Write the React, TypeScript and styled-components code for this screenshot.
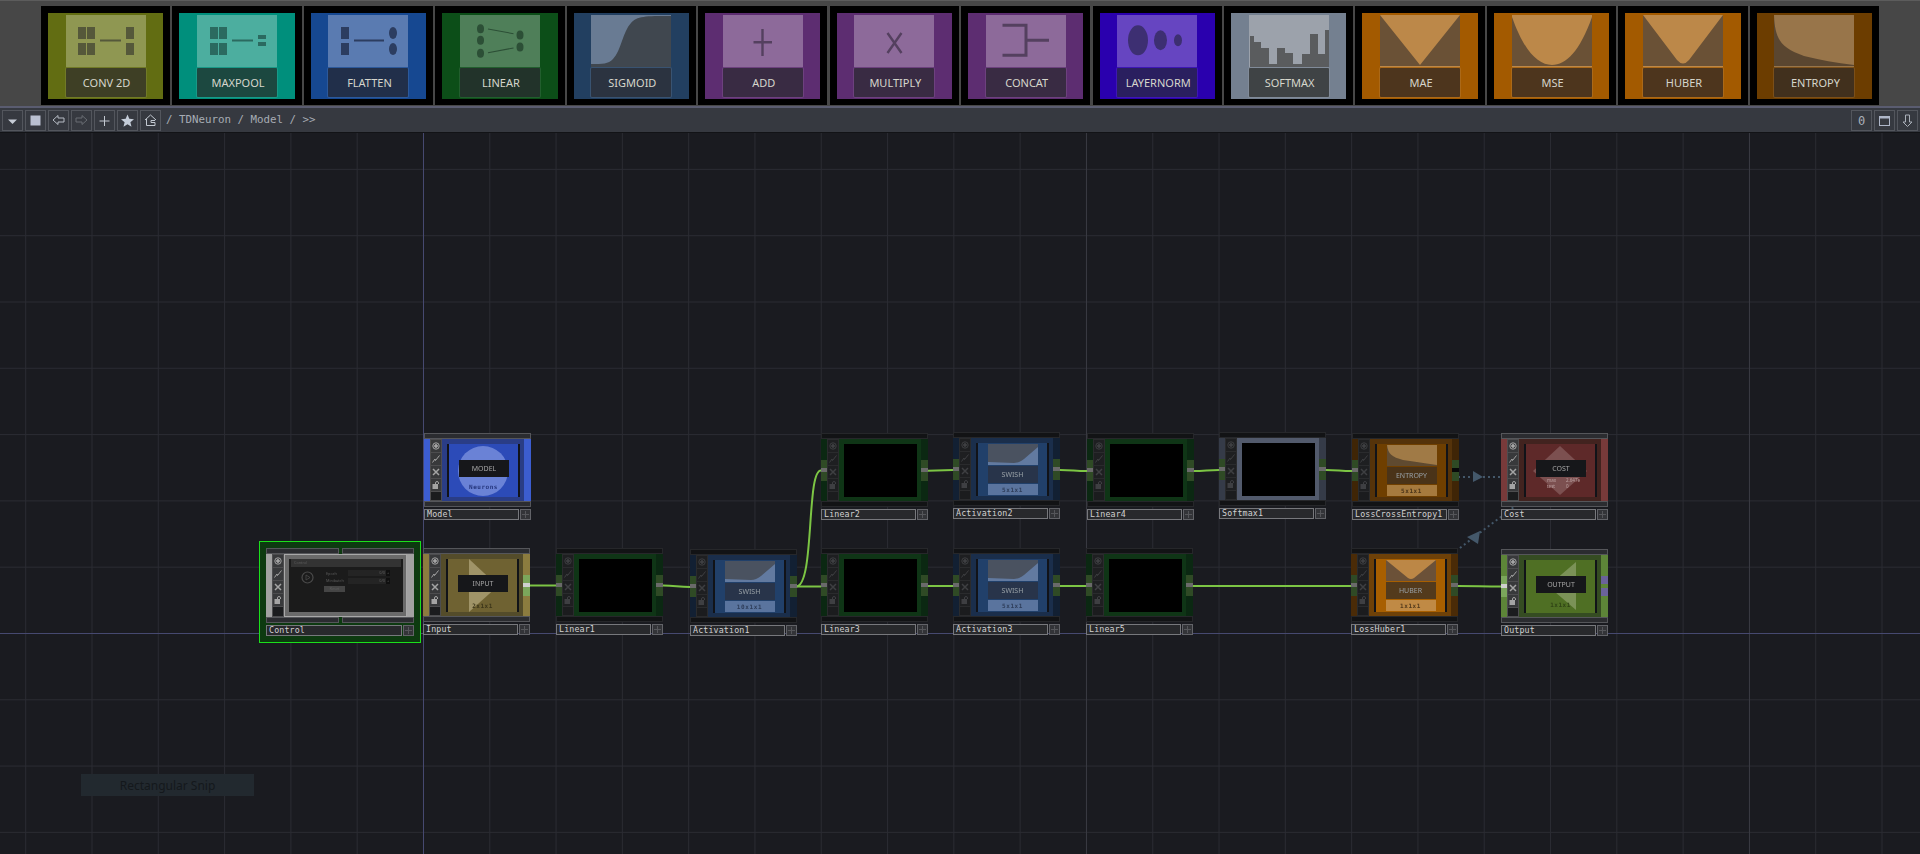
import React from 'react';
import styled, { createGlobalStyle } from 'styled-components';

const GlobalStyle = createGlobalStyle`
  html, body { margin: 0; padding: 0; background: #1a1b20; overflow: hidden; }
`;

const CANVAS_TOP = 133;

/* ---------- palette card strip ---------- */

type CardColors = { outer: string; panel: string; label: string; ink: string };

const OLIVE = { outer: '#626d12', panel: '#8f9752', label: '#3e3f25', ink: '#55583a' };
const TEAL = { outer: '#008f7c', panel: '#4cae9f', label: '#1c4840', ink: '#2b6a60' };
const BLUE = { outer: '#164891', panel: '#5a7bb1', label: '#212f4a', ink: '#2c3d60' };
const GREEN = { outer: '#0c4e18', panel: '#4f7f59', label: '#22332a', ink: '#2c4f36' };
const SLATE = { outer: '#223f60', panel: '#697b93', label: '#2b3340', ink: '#40474f' };
const PURPLE = { outer: '#5d2d71', panel: '#8d6a9a', label: '#392b43', ink: '#54405f' };
const INDIGO = { outer: '#2a00ae', panel: '#6645c1', label: '#2a1f5f', ink: '#3d2f72' };
const STEEL = { outer: '#748090', panel: '#9ca2ab', label: '#3f4345', ink: '#5a5c5e' };
const ORANGE = { outer: '#a35a00', panel: '#bc8849', label: '#4d351d', ink: '#6a5136' };
const BROWN = { outer: '#6c3d00', panel: '#98754a', label: '#41301d', ink: '#5a4630' };

const cardArt: Record<string, (ink: string) => React.ReactNode> = {
  'CONV 2D': (ink) => (
    <g fill={ink}>
      <rect x="12" y="12" width="8" height="12" /><rect x="21" y="12" width="8" height="12" />
      <rect x="12" y="28" width="8" height="12" /><rect x="21" y="28" width="8" height="12" />
      <rect x="34" y="24.5" width="21" height="2" />
      <rect x="60" y="12" width="8" height="12" /><rect x="60" y="28" width="8" height="12" />
    </g>
  ),
  MAXPOOL: (ink) => (
    <g fill={ink}>
      <rect x="13" y="12" width="8" height="12" /><rect x="22" y="12" width="8" height="12" />
      <rect x="13" y="28" width="8" height="12" /><rect x="22" y="28" width="8" height="12" />
      <rect x="35" y="24.5" width="21" height="2" />
      <rect x="61" y="20" width="8" height="4" /><rect x="61" y="27" width="8" height="4" />
    </g>
  ),
  FLATTEN: (ink) => (
    <g fill={ink}>
      <rect x="13" y="12" width="8" height="12" /><rect x="13" y="28" width="8" height="12" />
      <rect x="26" y="24.5" width="30" height="2" />
      <ellipse cx="65" cy="18" rx="4" ry="6" /><ellipse cx="65" cy="34" rx="4" ry="6" />
    </g>
  ),
  LINEAR: (ink) => (
    <g fill={ink}>
      <ellipse cx="20.5" cy="13.7" rx="3.5" ry="4.5" /><ellipse cx="20.5" cy="25.3" rx="3.5" ry="4.5" />
      <ellipse cx="20.5" cy="38.3" rx="3.5" ry="4.5" />
      <ellipse cx="60" cy="20" rx="3.5" ry="4.5" /><ellipse cx="60" cy="32" rx="3.5" ry="4.5" />
      <path d="M28 14L53.5 18.7M28 37.7L53.5 33" stroke={ink} strokeWidth="1.1" fill="none" />
    </g>
  ),
  SIGMOID: (ink) => (
    <path d="M0 49C12 49 17 49 22 44C30 36 32 16 40 8C46 1 54 1 80 1V52H0Z" fill={ink} />
  ),
  ADD: (ink) => <path d="M39.5 14V41M30.5 27.3H49" stroke={ink} strokeWidth="2.4" fill="none" />,
  MULTIPLY: (ink) => <path d="M33.5 18L47.5 38M47.5 18L33.5 38" stroke={ink} strokeWidth="2.4" fill="none" />,
  CONCAT: (ink) => <path d="M16.5 10.3H40V40.3H16.5M40 25.3H63" stroke={ink} strokeWidth="3" fill="none" />,
  LAYERNORM: (ink) => (
    <g fill={ink}>
      <ellipse cx="21" cy="25.3" rx="10" ry="15" />
      <ellipse cx="43.5" cy="25.3" rx="6.5" ry="10" />
      <ellipse cx="61" cy="25.3" rx="4" ry="6" />
    </g>
  ),
  SOFTMAX: (ink) => (
    <path
      d="M1 52V21H5V27H12V33H20V49H28V33H36V38H44V49H53V39H61V19H69V39H76V15H80V52Z"
      fill={ink}
    />
  ),
  MAE: (ink) => <path d="M0 0L40 50L80 0V52H0Z" fill={ink} />,
  MSE: (ink) => <path d="M0 2C12 36 26 50 40 50C54 50 68 36 80 2V52H0Z" fill={ink} />,
  HUBER: (ink) => <path d="M0 0L34 45Q40 52 46 45L80 0V52H0Z" fill={ink} />,
  ENTROPY: (ink) => <path d="M0 0C1 26 8 33 30 41C46 45 62 48 80 50V52H0Z" fill={ink} />,
};

const CARDS: { name: string; colors: CardColors }[] = [
  { name: 'CONV 2D', colors: OLIVE },
  { name: 'MAXPOOL', colors: TEAL },
  { name: 'FLATTEN', colors: BLUE },
  { name: 'LINEAR', colors: GREEN },
  { name: 'SIGMOID', colors: SLATE },
  { name: 'ADD', colors: PURPLE },
  { name: 'MULTIPLY', colors: PURPLE },
  { name: 'CONCAT', colors: PURPLE },
  { name: 'LAYERNORM', colors: INDIGO },
  { name: 'SOFTMAX', colors: STEEL },
  { name: 'MAE', colors: ORANGE },
  { name: 'MSE', colors: ORANGE },
  { name: 'HUBER', colors: ORANGE },
  { name: 'ENTROPY', colors: BROWN },
];

const Page = styled.div`
  display: flex;
  flex-direction: column;
  width: 1920px;
  height: 854px;
  overflow: hidden;
  background: #1a1b20;
`;

const CardStrip = styled.div`
  box-sizing: border-box;
  height: 106px;
  padding: 5px 41px 3px;
  display: grid;
  grid-template-columns: repeat(14, 1fr);
  column-gap: 2.3px;
  background: #474747;
  border-top: 1px solid #5c5c5c;
`;

const Card = styled.div`
  background: #000;
  padding: 7px 7px 6px;
  display: flex;
`;

const CardFace = styled.div<{ $color: string }>`
  flex: 1;
  display: flex;
  flex-direction: column;
  align-items: center;
  padding: 2px 0;
  background: ${({ $color }) => $color};
`;

const CardPanel = styled.div<{ $color: string }>`
  width: 80px;
  height: 52px;
  background: ${({ $color }) => $color};
  svg { display: block; }
`;

const CardLabel = styled.div<{ $bg: string; $edge: string }>`
  box-sizing: border-box;
  width: 80px;
  height: 29px;
  margin-top: 1px;
  padding-left: 2px;
  display: flex;
  align-items: center;
  justify-content: center;
  background: ${({ $bg }) => $bg};
  border-radius: 1px;
  box-shadow: 0 0 0 1px ${({ $edge }) => $edge}55;
  color: #d6d6cc;
  font: 11px "Noto Sans", sans-serif;
`;

/* ---------- path bar ---------- */

const PathBar = styled.div`
  box-sizing: border-box;
  height: 27px;
  padding: 2px 2px 1px;
  display: flex;
  align-items: flex-start;
  gap: 2px;
  background: #363940;
  border-top: 2px solid #5a5c70;
  border-bottom: 1px solid #121316;
`;

const BarButton = styled.div`
  box-sizing: border-box;
  flex: none;
  width: 21px;
  height: 21px;
  display: flex;
  align-items: center;
  justify-content: center;
  border: 1px solid #53565d;
  color: #a9afb8;
  font: 12px "DejaVu Sans Mono", monospace;
  svg { display: block; }
`;

const PathText = styled.div`
  margin: 3px 0 0 3px;
  color: #a6acb4;
  font: 10.8px/14px "DejaVu Sans Mono", monospace;
  white-space: pre;
`;

const BarSpacer = styled.div`
  flex: 1;
`;

/* ---------- network canvas ---------- */

const Canvas = styled.div`
  position: relative;
  flex: 1;
  overflow: hidden;
  background-color: #1a1b20;
  background-image:
    linear-gradient(#464970, #464970),
    linear-gradient(#464970, #464970),
    linear-gradient(to right, #383941 1px, transparent 1px),
    linear-gradient(to right, #2a2b32 1px, transparent 1px),
    linear-gradient(to bottom, #2a2b32 1px, transparent 1px);
  background-repeat: no-repeat, no-repeat, repeat, repeat, repeat;
  background-size: 1px 100%, 100% 1px, 663px 100%, 66.3px 100%, 100% 66.3px;
  background-position: 423px 0, 0 500px, 423px 0, 25.2px 0, 0 35.9px;
`;

const WireLayer = styled.svg`
  position: absolute;
  left: 0;
  top: 0;
  pointer-events: none;
`;

const SnipBox = styled.div`
  position: absolute;
  left: 81px;
  top: 641px;
  width: 173px;
  height: 22px;
  display: flex;
  align-items: center;
  justify-content: center;
  background: #22292f;
  color: #14181c;
  font: 12px "Noto Sans", sans-serif;
`;

const SelectBox = styled.div`
  position: absolute;
  left: 259px;
  top: 408px;
  width: 162px;
  height: 102px;
  box-sizing: border-box;
  border: 1px solid #1be01b;
  background: #0d3a10;
`;

const NodeRoot = styled.div<{ $x: number; $y: number; $w: number }>`
  position: absolute;
  left: ${({ $x }) => $x}px;
  top: ${({ $y }) => $y - CANVAS_TOP}px;
  width: ${({ $w }) => $w}px;
  display: flex;
  flex-direction: column;
`;

const EdgeRow = styled.div`
  display: flex;
  gap: 3px;
`;

const EdgeBar = styled.div<{ $lit: boolean }>`
  flex: 1;
  box-sizing: border-box;
  height: 6px;
  background: ${({ $lit }) => ($lit ? '#2b2c30' : '#121315')};
  border: 1px solid ${({ $lit }) => ($lit ? '#55565a' : '#26272a')};
`;

const NodeBody = styled.div<{ $h: number }>`
  height: ${({ $h }) => $h}px;
  display: flex;
`;

const Strip = styled.div<{ $w: number; $color: string }>`
  flex: none;
  width: ${({ $w }) => $w}px;
  display: flex;
  flex-direction: column;
  align-items: stretch;
  justify-content: center;
  background: ${({ $color }) => $color};
`;

const PORT_TONES = {
  dim: { bg: '#2f4a25', core: '#6a6a6a' },
  black: { bg: '#2f4a25', core: '#08090a' },
  lit: { bg: '#7ba65b', core: '#cfcfcf' },
};

const Port = styled.div<{ $tone: keyof typeof PORT_TONES }>`
  height: 21px;
  display: flex;
  align-items: center;
  background: ${({ $tone }) => PORT_TONES[$tone].bg};
  &::after {
    content: '';
    flex: 1;
    height: 4px;
    background: ${({ $tone }) => PORT_TONES[$tone].core};
  }
`;

const PurpleTab = styled.div`
  height: 8px;
  background: #6a629a;
  & + & { margin-top: 4px; }
`;

const IconColumn = styled.div<{ $lit: boolean }>`
  flex: none;
  width: 12px;
  display: flex;
  flex-direction: column;
  background: #1b1c1e;
  box-shadow: inset 0 0 0 1px ${({ $lit }) => ($lit ? '#4d4d4f' : '#2a2b2d')};
`;

const IconCell = styled.div<{ $lit: boolean }>`
  height: 12px;
  display: flex;
  align-items: center;
  justify-content: center;
  background: ${({ $lit }) => ($lit ? '#38393b' : '#1e1f21')};
  border: 1px solid ${({ $lit }) => ($lit ? '#4d4d4f' : '#2a2b2d')};
  margin-bottom: -1px;
  color: ${({ $lit }) => ($lit ? '#a4a4a4' : '#3e3f42')};
  svg { display: block; }
`;

const Viewer = styled.div<{ $border: string }>`
  flex: 1;
  display: flex;
  padding: 5px 4px 4px 5px;
  background: ${({ $border }) => $border};
`;

const ViewerImage = styled.div<{ $bg: string; $bars: boolean }>`
  position: relative;
  flex: 1;
  overflow: hidden;
  background: ${({ $bg }) => $bg};
  box-sizing: border-box;
  border-left: ${({ $bars }) => ($bars ? '2px solid #111318' : 'none')};
  border-right: ${({ $bars }) => ($bars ? '2px solid #111318' : 'none')};
  filter: blur(0.4px);
`;

const LabelRow = styled.div`
  margin-top: 2px;
  display: flex;
  gap: 1px;
`;

const NameBox = styled.div<{ $lit: boolean }>`
  flex: 1;
  box-sizing: border-box;
  height: 11px;
  padding-left: 2px;
  background: #28292c;
  border: 1px solid #77787c;
  color: #d2d2d2;
  font: 8.3px/9px "DejaVu Sans Mono", monospace;
  letter-spacing: 0.15px;
  white-space: pre;
  overflow: hidden;
`;

const PlusBox = styled.div`
  flex: none;
  box-sizing: border-box;
  width: 11px;
  height: 11px;
  display: flex;
  align-items: center;
  justify-content: center;
  background: #333438;
  border: 1px solid #626368;
  color: #55565a;
  svg { display: block; }
`;

/* screen parts */

const Shape = styled.svg`
  position: absolute;
  left: 0;
  top: 0;
`;

const Badge = styled.div<{ $top: number }>`
  position: absolute;
  left: 10px;
  top: ${({ $top }) => $top}px;
  width: 50px;
  height: 17px;
  display: flex;
  align-items: center;
  justify-content: center;
  background: #16171a;
  color: #a5a5a5;
  font: 7px "Noto Sans", sans-serif;
`;

const Caption = styled.div<{ $color: string; $top: number }>`
  position: absolute;
  left: 0;
  right: 0;
  top: ${({ $top }) => $top}px;
  text-align: center;
  color: ${({ $color }) => $color};
  font: 600 6px/8px "DejaVu Sans Mono", monospace;
  letter-spacing: 0.5px;
`;

const CostTable = styled.div`
  position: absolute;
  left: 21px;
  right: 15px;
  top: 33px;
  display: grid;
  grid-template-columns: 1fr auto;
  color: #bda2a2;
  font: 4.5px/6px "Noto Sans", sans-serif;
`;

const PanelStack = styled.div`
  position: absolute;
  left: 50%;
  top: 1px;
  transform: translateX(-50%);
  width: 50px;
  display: flex;
  flex-direction: column;
  gap: 1px;
  svg { display: block; }
`;

const PanelLabel = styled.div<{ $bg: string }>`
  height: 17px;
  display: flex;
  align-items: center;
  justify-content: center;
  background: ${({ $bg }) => $bg};
  color: #98a0a6;
  font: 7px "Noto Sans", sans-serif;
`;

const PanelSize = styled.div<{ $bg: string; $color: string }>`
  height: 11px;
  display: flex;
  align-items: center;
  justify-content: center;
  background: ${({ $bg }) => $bg};
  color: ${({ $color }) => $color};
  font: 600 6px "DejaVu Sans Mono", monospace;
  letter-spacing: 0.6px;
`;

/* control panel thumbnail */

const ControlFace = styled.div`
  position: absolute;
  inset: 0;
  color: #5d5d5d;
  font: 3.8px/5px "Noto Sans", sans-serif;
`;

const ControlHeader = styled.div`
  height: 8px;
  margin: 0 2px;
  padding-left: 3px;
  background: #333;
  line-height: 8px;
`;

const ControlMain = styled.div`
  display: flex;
  padding: 3px 0 0 12px;
`;

const PlayRing = styled.svg`
  flex: none;
  margin-top: 1px;
`;

const ControlForm = styled.div`
  margin-left: 12px;
  width: 64px;
  display: flex;
  flex-direction: column;
  gap: 1.5px;
`;

const FormRow = styled.div`
  display: flex;
  height: 6px;
  align-items: center;
`;

const FormName = styled.div`
  width: 22px;
`;

const FormField = styled.div`
  flex: 1;
  height: 6px;
  padding-right: 1px;
  text-align: right;
  background: #242424;
  line-height: 6px;
`;

const FormStep = styled.div`
  width: 4px;
  height: 6px;
  text-align: center;
  background: #0f0f0f;
  line-height: 6px;
`;

const ResetButton = styled.div`
  width: 21px;
  height: 6px;
  margin: 1px 0 0 -2px;
  text-align: center;
  background: #454545;
  line-height: 6px;
`;

/* ---------- small drawings ---------- */

const NodeIcon = ({ i }: { i: number }) => {
  const common = { width: 8, height: 8, viewBox: '0 0 8 8', fill: 'none', stroke: 'currentColor' };
  if (i === 0) {
    return (
      <svg {...common} strokeWidth="1">
        <circle cx="4" cy="4" r="3.2" />
        <circle cx="4" cy="4" r="1.4" fill="currentColor" />
      </svg>
    );
  }
  if (i === 1) {
    return (
      <svg {...common} strokeWidth="1">
        <path d="M0.5 7.5L3 4L3.5 5.5L7.5 0.5" />
      </svg>
    );
  }
  if (i === 2) {
    return (
      <svg {...common} strokeWidth="1.5">
        <path d="M1 1L7 7M7 1L1 7" />
      </svg>
    );
  }
  return (
    <svg {...common} strokeWidth="1">
      <rect x="1" y="3.5" width="4.5" height="4" fill="currentColor" />
      <path d="M3.5 3.5V2A1.5 1.5 0 0 1 6.5 2V3" />
    </svg>
  );
};

const NodePlus = () => (
  <svg width="7" height="7" viewBox="0 0 7 7" fill="currentColor">
    <path d="M3 0H4V3H7V4H4V7H3V4H0V3H3Z" />
  </svg>
);

const BarIcon = ({ kind }: { kind: string }) => {
  const outline = { width: 15, height: 15, viewBox: '0 0 15 15', fill: 'none', strokeWidth: 1 };
  switch (kind) {
    case 'menu':
      return (
        <svg width="15" height="15" viewBox="0 0 15 15"><path d="M3 6.5H12L7.5 11Z" fill="#c6ccd6" /></svg>
      );
    case 'stop':
      return (
        <svg width="15" height="15" viewBox="0 0 15 15"><rect x="2.5" y="2.5" width="10" height="10" fill="#b9bfd0" /></svg>
      );
    case 'back':
      return (
        <svg {...outline} stroke="#b6bcc4"><path d="M2 7L7 2.5V5H13V9H7V11.5Z" /></svg>
      );
    case 'next':
      return (
        <svg {...outline} stroke="#686c72"><path d="M13 7L8 2.5V5H2V9H8V11.5Z" /></svg>
      );
    case 'plus':
      return (
        <svg {...outline} stroke="#c2c8d0"><path d="M7.5 3V13M2.5 8H12.5" /></svg>
      );
    case 'star':
      return (
        <svg width="15" height="15" viewBox="0 0 15 15">
          <path d="M7.5 1.5L9.3 5.8L14 6.2L10.4 9.2L11.5 13.8L7.5 11.3L3.5 13.8L4.6 9.2L1 6.2L5.7 5.8Z" fill="#c4ccd8" />
        </svg>
      );
    case 'home':
      return (
        <svg {...outline} stroke="#c2c8d0">
          <path d="M2 7L7.5 2L13 7M3.5 6V12.5H12V9.5H8V7.5H12" />
        </svg>
      );
    case 'window':
      return (
        <svg {...outline} stroke="#aeb6c8" strokeWidth="1">
          <rect x="2.5" y="3.5" width="10" height="9" />
          <path d="M2.5 4.5H12.5" strokeWidth="2" />
        </svg>
      );
    default:
      return (
        <svg {...outline} stroke="#a9afb8"><path d="M7.5 13.5L3 9H5.5V2H9.5V9H12Z" /></svg>
      );
  }
};

/* ---------- node data ---------- */

type PortTone = keyof typeof PORT_TONES | 'purple' | undefined;

type Skin = { strip: string; rim: string; image: string; lit: boolean; bars?: boolean };

const SKINS: Record<string, Skin> = {
  linear: { strip: '#0b2812', rim: '#0f3516', image: '#000', lit: false },
  swish: { strip: '#122033', rim: '#1a2e4b', image: '#21406a', lit: false, bars: true },
  softmax: { strip: '#353b48', rim: '#525a6c', image: '#000', lit: false },
  entropy: { strip: '#3f2506', rim: '#55330a', image: '#6f3f00', lit: false, bars: true },
  huber: { strip: '#4a2b07', rim: '#6e4108', image: '#a85f00', lit: false, bars: true },
  model: { strip: '#3c5dd0', rim: '#2a3d86', image: '#2c4bb8', lit: true, bars: true },
  input: { strip: '#8c7c3f', rim: '#544c2a', image: '#6f6232', lit: true, bars: true },
  cost: { strip: '#783a3a', rim: '#42231f', image: '#5e2929', lit: true, bars: true },
  output: { strip: '#5d8538', rim: '#354c22', image: '#4f6f24', lit: true, bars: true },
};

type NodeDef = {
  name: string;
  x: number;
  y: number;
  skin: keyof typeof SKINS;
  left?: PortTone;
  right?: PortTone;
  size?: string;
};

const NODES: NodeDef[] = [
  { name: 'Model', x: 424, y: 433, skin: 'model' },
  { name: 'Input', x: 423, y: 548, skin: 'input', right: 'lit' },
  { name: 'Linear1', x: 556, y: 548, skin: 'linear', left: 'dim', right: 'dim' },
  { name: 'Activation1', x: 690, y: 549, skin: 'swish', left: 'dim', right: 'dim', size: '10x1x1' },
  { name: 'Linear2', x: 821, y: 433, skin: 'linear', left: 'dim', right: 'dim' },
  { name: 'Linear3', x: 821, y: 548, skin: 'linear', left: 'dim', right: 'dim' },
  { name: 'Activation2', x: 953, y: 432, skin: 'swish', left: 'dim', right: 'dim', size: '5x1x1' },
  { name: 'Activation3', x: 953, y: 548, skin: 'swish', left: 'dim', right: 'dim', size: '5x1x1' },
  { name: 'Linear4', x: 1087, y: 433, skin: 'linear', left: 'dim', right: 'dim' },
  { name: 'Linear5', x: 1086, y: 548, skin: 'linear', left: 'dim', right: 'dim' },
  { name: 'Softmax1', x: 1219, y: 432, skin: 'softmax', left: 'dim', right: 'dim' },
  { name: 'LossCrossEntropy1', x: 1352, y: 433, skin: 'entropy', left: 'dim', right: 'black', size: '5x1x1' },
  { name: 'LossHuber1', x: 1351, y: 548, skin: 'huber', left: 'dim', right: 'dim', size: '1x1x1' },
  { name: 'Cost', x: 1501, y: 433, skin: 'cost' },
  { name: 'Output', x: 1501, y: 549, skin: 'output', left: 'lit', right: 'purple' },
];

const WIRES = [
  'M530 585.5H556',
  'M663 585.5C675 585.5 678 587 690 587',
  'M796 586.5H821',
  'M796 586.5C815 586.5 806 470 821 470.5',
  'M928 470.8L953 470',
  'M928 586H953',
  'M1060 470C1072 470 1075 471 1087 471',
  'M1060 586H1086',
  'M1194 471C1204 471 1209 470 1219 470',
  'M1326 470C1338 470 1340 471 1352 471',
  'M1193 586H1351',
  'M1458 586C1476 586 1483 586.5 1501 586.5',
];

/* ---------- node screens ---------- */

const SwishPanel = ({ size }: { size: string }) => (
  <PanelStack>
    <svg width="50" height="21" viewBox="0 0 50 21">
      <rect width="50" height="21" fill="#4a5260" />
      <path d="M0 18L26 19Q31 19 36 15L50 3V21H0Z" fill="#627aa0" />
    </svg>
    <PanelLabel $bg="#28344a">SWISH</PanelLabel>
    <PanelSize $bg="#5a749e" $color="#2e3d5a">{size}</PanelSize>
  </PanelStack>
);

const EntropyPanel = ({ size }: { size: string }) => (
  <PanelStack>
    <svg width="50" height="21" viewBox="0 0 50 21">
      <rect width="50" height="21" fill="#a07a46" />
      <path d="M0 0C1 9 5 12 16 15C28 17 38 18 50 20V21H0Z" fill="#5f4a30" />
    </svg>
    <PanelLabel $bg="#4a3318">ENTROPY</PanelLabel>
    <PanelSize $bg="#a67a3e" $color="#4a3318">{size}</PanelSize>
  </PanelStack>
);

const HuberPanel = ({ size }: { size: string }) => (
  <PanelStack>
    <svg width="50" height="21" viewBox="0 0 50 21">
      <rect width="50" height="21" fill="#bc8746" />
      <path d="M0 0L22 18Q25 20 28 18L50 0V21H0Z" fill="#6b5138" />
    </svg>
    <PanelLabel $bg="#533a1c">HUBER</PanelLabel>
    <PanelSize $bg="#c08a45" $color="#533a1c">{size}</PanelSize>
  </PanelStack>
);

const ScreenContent = ({ node }: { node: NodeDef }) => {
  switch (node.skin) {
    case 'swish':
      return <SwishPanel size={node.size!} />;
    case 'entropy':
      return <EntropyPanel size={node.size!} />;
    case 'huber':
      return <HuberPanel size={node.size!} />;
    case 'model':
      return (
        <>
          <Shape width="72" height="53" viewBox="0 0 72 53"><circle cx="34" cy="27" r="25" fill="#6a82d6" /></Shape>
          <Badge $top={16}>MODEL</Badge>
          <Caption $color="#24357c" $top={39}>Neurons</Caption>
        </>
      );
    case 'input':
      return (
        <>
          <Shape width="72" height="53" viewBox="0 0 72 53"><path d="M21 0L50 27L21 53Z" fill="#a09468" /></Shape>
          <Badge $top={16}>INPUT</Badge>
          <Caption $color="#3c3519" $top={43}>2x1x1</Caption>
        </>
      );
    case 'cost':
      return (
        <>
          <Shape width="72" height="53" viewBox="0 0 72 53"><path d="M34 2L61 27L34 51L7 27Z" fill="#7c5050" /></Shape>
          <Badge $top={16}>COST</Badge>
          <CostTable>
            <span>max</span><span>2.647e</span>
            <span>test</span><span>0</span>
          </CostTable>
        </>
      );
    case 'output':
      return (
        <>
          <Shape width="72" height="53" viewBox="0 0 72 53"><path d="M50 2V50L22 26Z" fill="#7b9257" /></Shape>
          <Badge $top={16}>OUTPUT</Badge>
          <Caption $color="#2f4415" $top={41}>1x1x1</Caption>
        </>
      );
    default:
      return null;
  }
};

const SideStrip = ({ w, color, tone }: { w: number; color: string; tone: PortTone }) => (
  <Strip $w={w} $color={color}>
    {tone === 'purple' ? (
      <>
        <PurpleTab />
        <PurpleTab />
      </>
    ) : (
      tone && <Port $tone={tone} />
    )}
  </Strip>
);

const Icons = ({ lit }: { lit: boolean }) => (
  <IconColumn $lit={lit}>
    {[0, 1, 2, 3].map((i) => (
      <IconCell key={i} $lit={lit}>
        <NodeIcon i={i} />
      </IconCell>
    ))}
  </IconColumn>
);

const Label = ({ name, lit }: { name: string; lit: boolean }) => (
  <LabelRow>
    <NameBox $lit={lit}>{name}</NameBox>
    <PlusBox><NodePlus /></PlusBox>
  </LabelRow>
);

const NetworkNode = ({ node }: { node: NodeDef }) => {
  const skin = SKINS[node.skin];
  return (
    <NodeRoot $x={node.x} $y={node.y} $w={107}>
      <EdgeRow><EdgeBar $lit={skin.lit} /></EdgeRow>
      <NodeBody $h={62}>
        <SideStrip w={6} color={skin.strip} tone={node.left} />
        <Icons lit={skin.lit} />
        <Viewer $border={skin.rim}>
          <ViewerImage $bg={skin.image} $bars={!!skin.bars}>
            <ScreenContent node={node} />
          </ViewerImage>
        </Viewer>
        <SideStrip w={7} color={skin.strip} tone={node.right} />
      </NodeBody>
      <EdgeRow><EdgeBar $lit={skin.lit} /></EdgeRow>
      <Label name={node.name} lit={skin.lit} />
    </NodeRoot>
  );
};

const ControlViewer = styled(Viewer)`
  padding: 5px 4px 5px 5px;
  box-shadow: inset 0 0 0 1px #a8a8a8;
`;

const ControlNode = () => (
  <NodeRoot $x={266} $y={548} $w={148}>
    <EdgeRow><EdgeBar $lit /><EdgeBar $lit /></EdgeRow>
    <NodeBody $h={63}>
      <SideStrip w={6} color="#a2a2a2" tone={undefined} />
      <Icons lit />
      <ControlViewer $border="#6a6a6a">
        <ViewerImage $bg="#1b1b1b" $bars={false}>
          <ControlFace>
            <ControlHeader>Control</ControlHeader>
            <ControlMain>
              <PlayRing width="13" height="13" viewBox="0 0 13 13">
                <circle cx="6.5" cy="6.5" r="5.5" fill="none" stroke="#4a4a4a" strokeWidth="1.2" />
                <path d="M5 4L9 6.5L5 9Z" fill="none" stroke="#4a4a4a" strokeWidth="0.8" />
              </PlayRing>
              <ControlForm>
                <FormRow><FormName>Epoch</FormName><FormField>0/0</FormField><FormStep>+</FormStep></FormRow>
                <FormRow><FormName>Minibatch</FormName><FormField>0/0</FormField><FormStep>+</FormStep></FormRow>
                <ResetButton>Reset</ResetButton>
              </ControlForm>
            </ControlMain>
          </ControlFace>
        </ViewerImage>
      </ControlViewer>
      <SideStrip w={7} color="#a2a2a2" tone={undefined} />
    </NodeBody>
    <EdgeRow><EdgeBar $lit /><EdgeBar $lit /></EdgeRow>
    <Label name="Control" lit />
  </NodeRoot>
);

export default function App() {
  return (
    <Page>
      <GlobalStyle />
      <CardStrip>
        {CARDS.map(({ name, colors }) => {
          const lossCurve = ['MAE', 'MSE', 'HUBER', 'ENTROPY'].includes(name);
          return (
            <Card key={name}>
              <CardFace $color={colors.outer}>
                <CardPanel $color={colors.panel}>
                  <svg width="80" height="52" viewBox="0 0 80 52">
                    {cardArt[name](colors.ink)}
                    {lossCurve && <rect y="51" width="80" height="1" fill={colors.panel} />}
                  </svg>
                </CardPanel>
                <CardLabel $bg={colors.label} $edge={colors.panel}>{name}</CardLabel>
              </CardFace>
            </Card>
          );
        })}
      </CardStrip>
      <PathBar>
        {['menu', 'stop', 'back', 'next', 'plus', 'star', 'home'].map((kind) => (
          <BarButton key={kind}><BarIcon kind={kind} /></BarButton>
        ))}
        <PathText>/ TDNeuron / Model / &gt;&gt;</PathText>
        <BarSpacer />
        <BarButton>0</BarButton>
        <BarButton><BarIcon kind="window" /></BarButton>
        <BarButton><BarIcon kind="down" /></BarButton>
      </PathBar>
      <Canvas>
        <SnipBox>Rectangular Snip</SnipBox>
        <SelectBox />
        <WireLayer width="1920" height="721" viewBox={`0 ${CANVAS_TOP} 1920 721`}>
          <g fill="none" stroke="#7cc544" strokeWidth="2">
            {WIRES.map((d) => <path key={d} d={d} />)}
          </g>
          <g fill="none" stroke="#44586a" strokeWidth="2" strokeDasharray="2 3">
            <path d="M1458 477H1520" />
            <path d="M1448 557L1527 497" />
          </g>
          <g fill="#44586a">
            <path d="M1473 471L1483 477L1473 482Z" />
            <path d="M1467 537L1480 531L1478 544Z" />
          </g>
        </WireLayer>
        <ControlNode />
        {NODES.map((node) => <NetworkNode key={node.name} node={node} />)}
      </Canvas>
    </Page>
  );
}
